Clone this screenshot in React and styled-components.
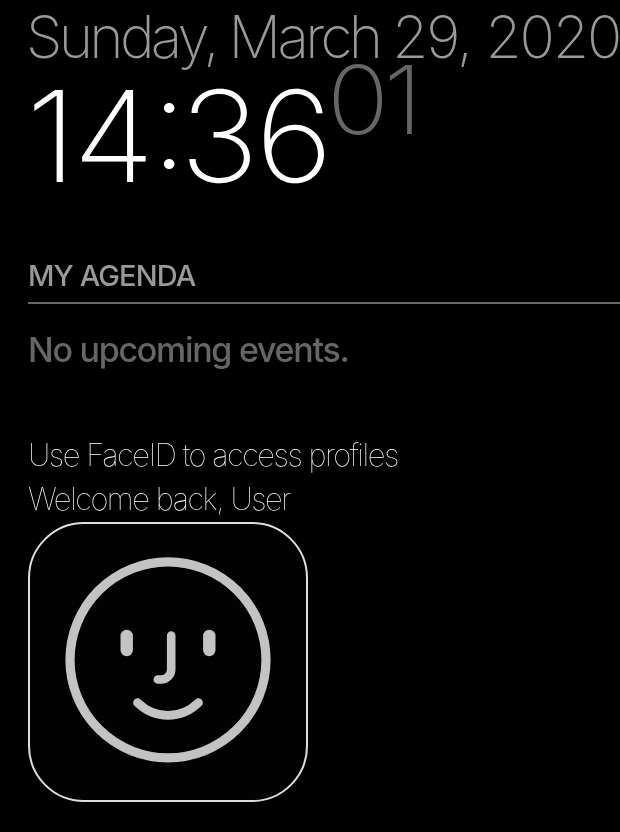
import React from "react";
import styled, { createGlobalStyle } from "styled-components";

const GlobalStyle = createGlobalStyle`
  * { box-sizing: border-box; }
  body { margin: 0; background: #000; overflow: hidden; }
`;
const Mirror = styled.main`
  width: 620px;
  height: 832px;
  padding-left: 28px;
  background: #000;
  overflow: hidden;
  font-family: Inter, "Liberation Sans", sans-serif;
  white-space: nowrap;
`;
const DateLine = styled.div`
  padding-top: 2px;
  height: 70px;
  margin-left: -2px;
  font-size: 58.5px;
  line-height: 70px;
  font-weight: 200;
  letter-spacing: -3.7px;
  color: #999;
  will-change: transform;
`;
const DateNumbers = styled.span`
  letter-spacing: -2px;
`;
const Clock = styled.div`
  display: flex;
  align-items: flex-start;
  height: 186px;
  margin-left: -2px;
  color: #fff;
`;
const Time = styled.span`
  width: 301px;
  font-size: 126.5px;
  line-height: 132px;
  font-weight: 200;
  letter-spacing: -3.6px;
  font-feature-settings: "case" 1;
  transform: scaleX(1.055);
  transform-origin: left;
`;
const Colon = styled.span`
  letter-spacing: -7.5px;
`;
const Seconds = styled.span`
  font-size: 95px;
  line-height: 59px;
  font-weight: 200;
  letter-spacing: -5px;
  color: #666;
  transform: scaleX(1.08);
  transform-origin: left;
`;
const AgendaHeader = styled.header`
  height: 48px;
  border-bottom: 2px solid #666;
  font-size: 29px;
  line-height: 40px;
  font-weight: 500;
  letter-spacing: -0.9px;
  color: #999;
  will-change: transform;
`;
const Empty = styled.p`
  height: 40px;
  margin: 26px 0 63px;
  font-size: 34px;
  line-height: 40px;
  font-weight: 500;
  letter-spacing: -1.28px;
  color: #666;
  will-change: transform;
`;
const Message = styled.p`
  margin: 0;
  font-size: 31px;
  line-height: 44px;
  font-weight: 100;
  letter-spacing: -1.46px;
  color: #fff;
  will-change: transform;
`;
const FaceCard = styled.div`
  width: 280px;
  height: 280px;
  margin-top: 1px;
  border: 2px solid #ddd;
  border-radius: 56px;
  background: #020202;
`;
const Face = styled.svg`
  display: block;
  width: 276px;
  height: 276px;
`;

export default function App() {
  return (
    <>
      <GlobalStyle />
      <Mirror>
        <DateLine>Sunday, March <DateNumbers>29, 2020</DateNumbers></DateLine>
        <Clock><Time>14<Colon>:</Colon>36</Time><Seconds>01</Seconds></Clock>
        <AgendaHeader>MY AGENDA</AgendaHeader>
        <Empty>No upcoming events.</Empty>
        <Message>Use FaceID to access profiles</Message>
        <Message>Welcome back, User</Message>
        <FaceCard>
          <Face viewBox="30 524 276 276" fill="none" stroke="#c3c3c3" strokeLinecap="round">
            <circle cx="168" cy="659.8" r="98" strokeWidth="9.2" />
            <path d="M126.700 636V650M209.300 636V650" strokeWidth="12.4" />
            <path d="M171.200 635.500V669.500A10 10 0 0 1 161.200 679.500H157.800" strokeWidth="8.600" />
            <path d="M137.500 702.700C155 719.700 181 719.700 198.500 702.700" strokeWidth="8.800" />
          </Face>
        </FaceCard>
      </Mirror>
    </>
  );
}
